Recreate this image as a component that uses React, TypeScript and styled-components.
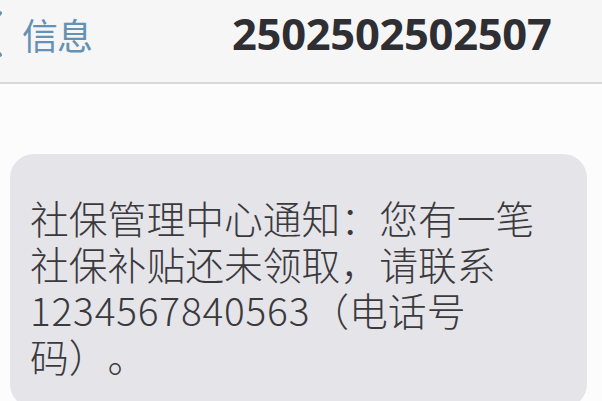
import React from 'react';
import styled, { createGlobalStyle } from 'styled-components';

const GlobalStyle = createGlobalStyle`
  html, body {
    margin: 0;
    padding: 0;
    overflow: hidden;
    background: #fcfcfc;
  }
`;

const Screen = styled.div`
  width: 602px;
  height: 401px;
  overflow: hidden;
  display: flex;
  flex-direction: column;
  background: #fcfcfc;
`;

const Header = styled.header`
  height: 67px;
  padding-bottom: 15px;
  display: flex;
  align-items: center;
  background: #f6f6f7;
  border-bottom: 2px solid #d9d9dc;
  flex-shrink: 0;
`;

const Back = styled.div`
  display: flex;
  align-items: center;
  margin-left: -20px;
  gap: 18px;
  color: #6592b4;
  font-family: "Noto Sans CJK SC", sans-serif;
  font-size: 36px;
  letter-spacing: -1px;
`;

const Title = styled.h1`
  margin: 0 0 0 140px;
  font-family: "Open Sans", "Noto Sans", sans-serif;
  font-weight: 700;
  font-size: 43.5px;
  letter-spacing: -0.3px;
  color: #2f2f33;
`;

const Thread = styled.main`
  flex: 1;
  padding: 70px 15px 0 10px;
`;

const Bubble = styled.div`
  background: #e5e4e9;
  border-radius: 24px;
  padding: 40px 20px 30px 20px;
  font-family: "Noto Sans CJK SC", sans-serif;
  font-weight: 300;
  font-size: 38.8px;
  line-height: 46px;
  color: #3a3a3d;
  text-spacing-trim: space-all;
`;

const Line = styled.div`
  white-space: nowrap;
`;

const Digits = styled.span`
  letter-spacing: 0.8px;
`;

function Chevron() {
  return (
    <svg width="24" height="50" viewBox="0 0 24 50" fill="none">
      <path d="M20 4 L4 25 L20 46" stroke="currentColor" strokeWidth="4" strokeLinecap="round" strokeLinejoin="round" />
    </svg>
  );
}

export default function App() {
  return (
    <>
      <GlobalStyle />
      <Screen>
        <Header>
          <Back>
            <Chevron />
            <span>信息</span>
          </Back>
          <Title>2502502502507</Title>
        </Header>
        <Thread>
          <Bubble>
            <Line>社保管理中心通知：您有一笔</Line>
            <Line>社保补贴还未领取，请联系</Line>
            <Line>
              <Digits>1234567840563</Digits>（电话号
            </Line>
            <Line>码）。</Line>
          </Bubble>
        </Thread>
      </Screen>
    </>
  );
}
